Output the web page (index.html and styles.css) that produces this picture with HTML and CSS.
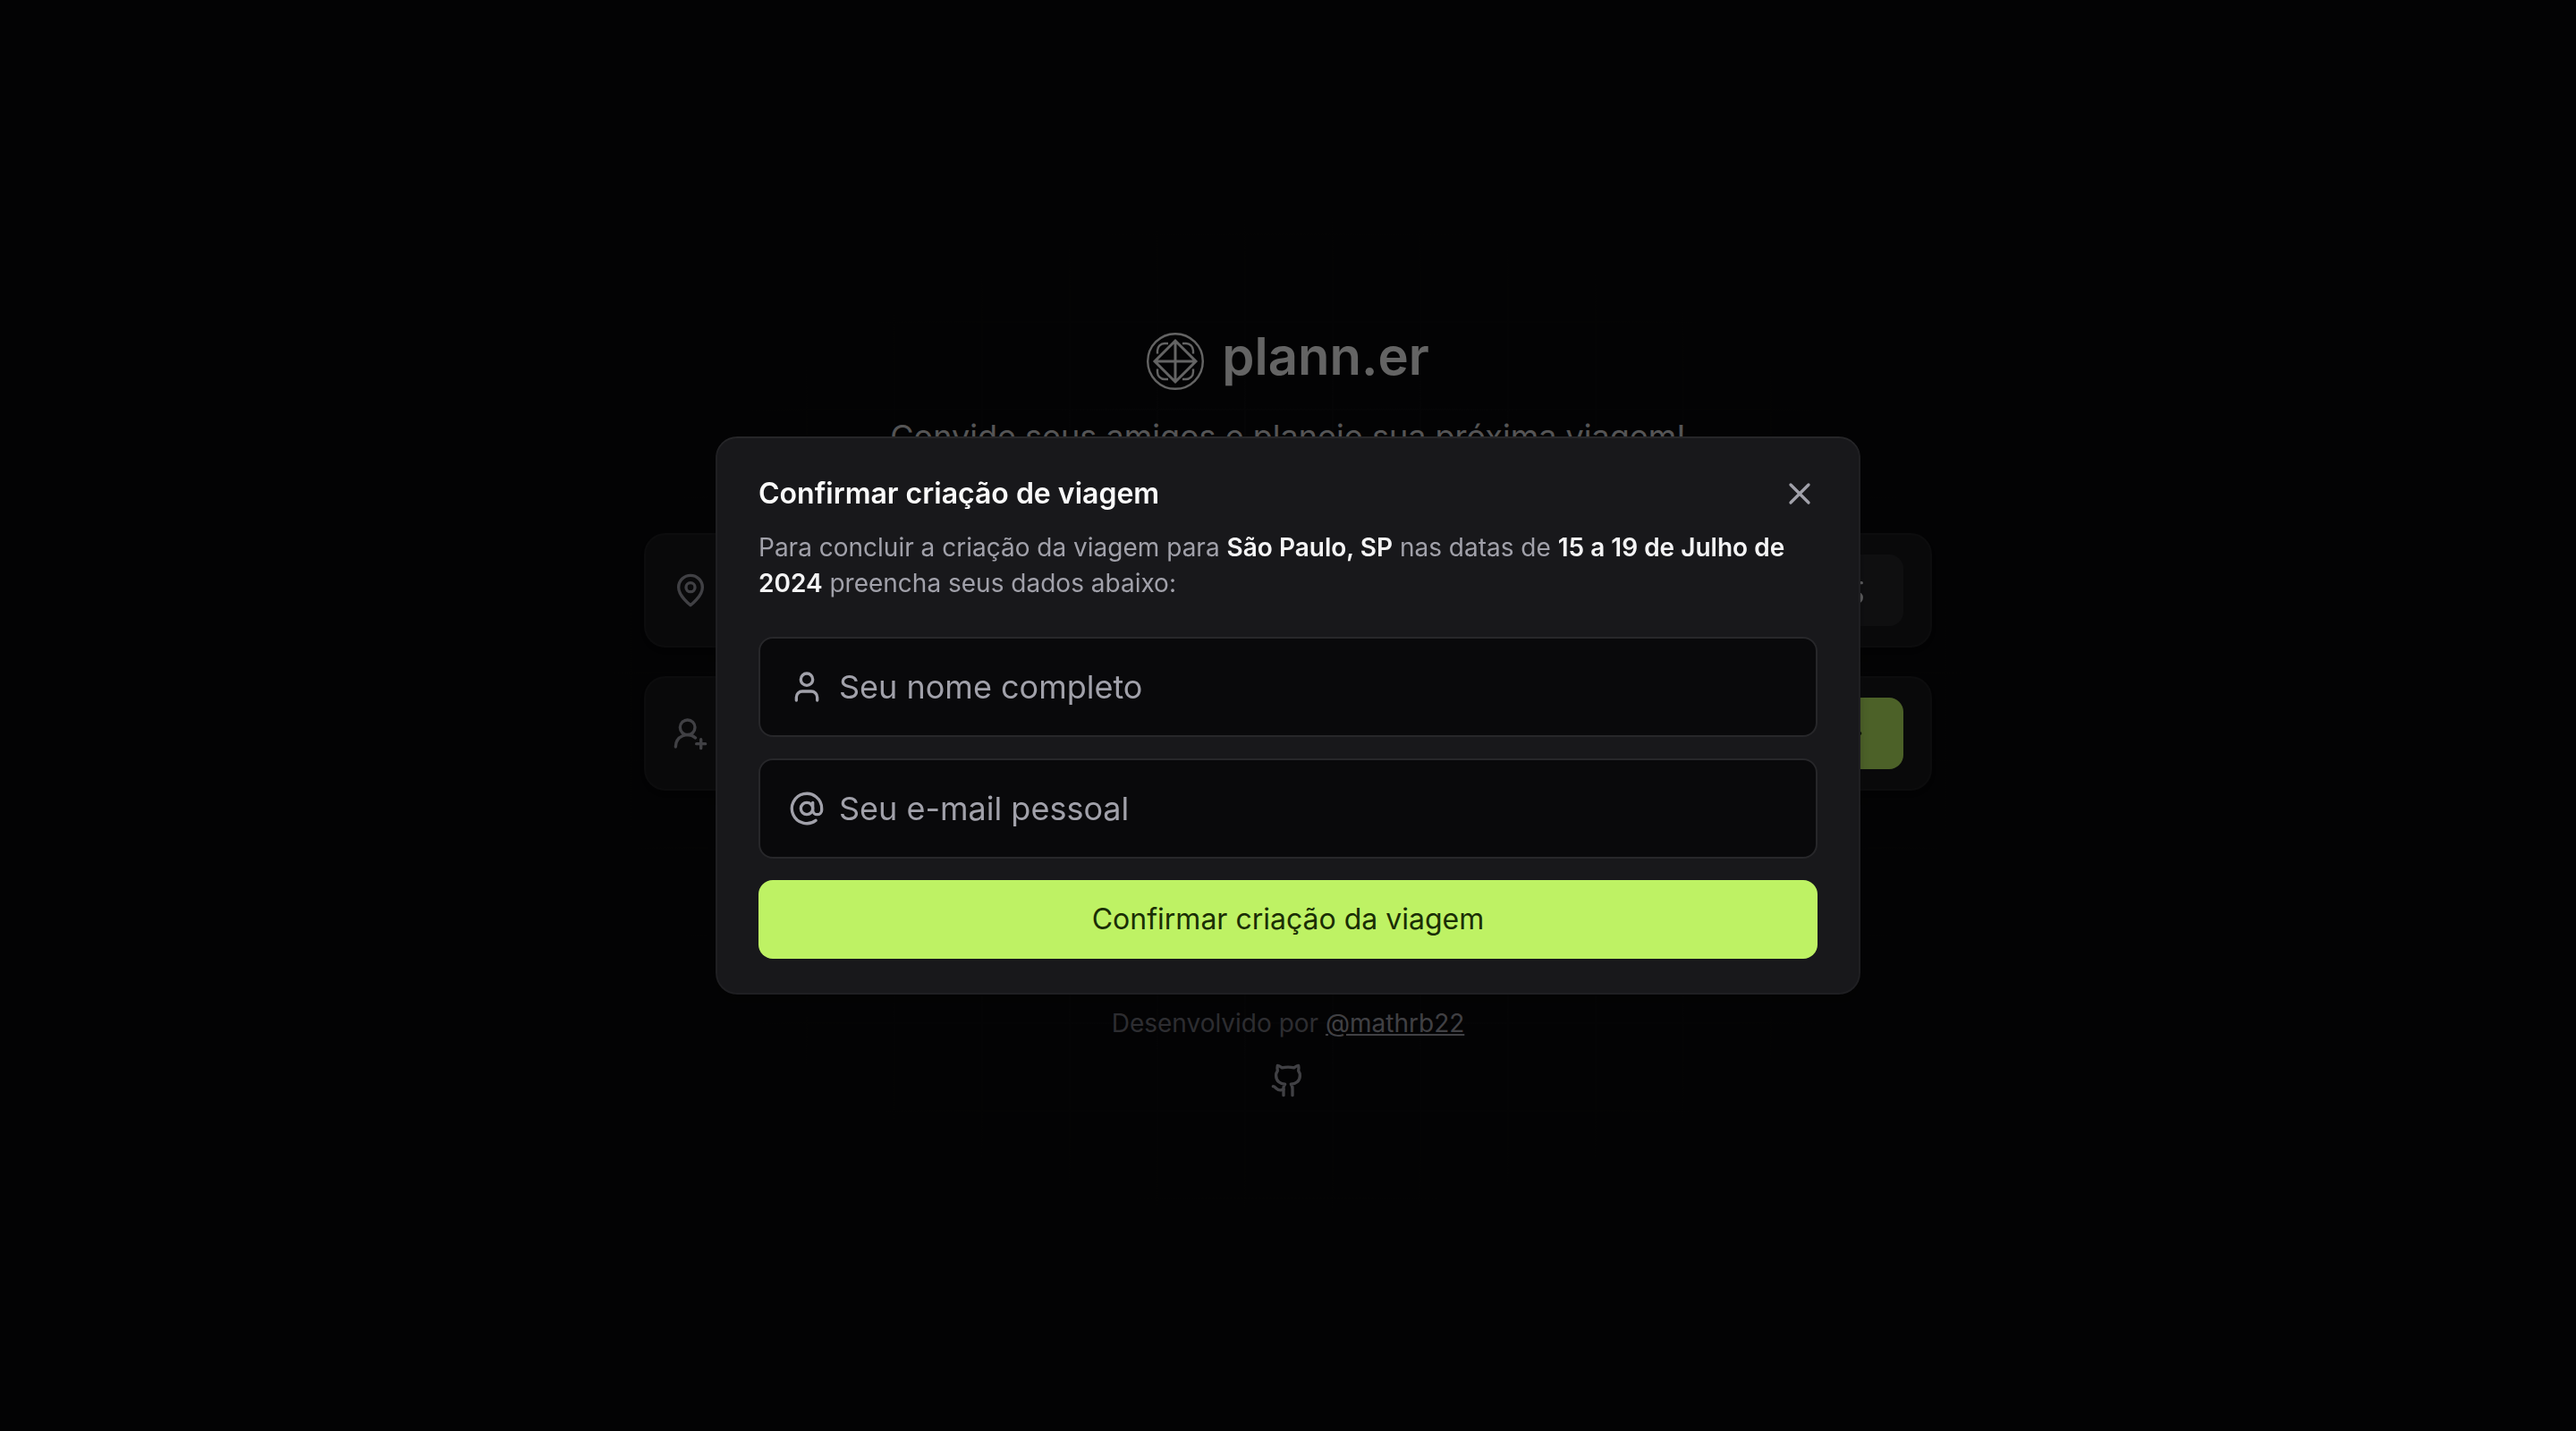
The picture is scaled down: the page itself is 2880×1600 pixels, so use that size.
FILE: index.html
```html
<!DOCTYPE html>
<html lang="pt-BR">
<head>
  <meta charset="utf-8">
  <meta name="viewport" content="width=device-width, initial-scale=1">
  <title>plann.er</title>
  <link rel="stylesheet" href="styles.css">
</head>
<body>
  <main class="page">
    <div class="column">
      <header class="intro">
        <h1 class="logo">
          <svg class="logo-mark" viewBox="0 0 64 64" aria-hidden="true">
            <circle cx="32" cy="32" r="30.800"/>
            <path d="M12 23.500v-3.500a8 8 0 0 1 8-8h4M40 12h4a8 8 0 0 1 8 8v3.500M52 40.500V44a8 8 0 0 1-8 8h-4M24 52h-4a8 8 0 0 1-8-8v-3.500"/>
            <path class="logo-diamond" d="M32 9 55 32 32 55 9 32zM32 9v46M9 32h46"/>
          </svg>
          <span class="logo-name">plann.er</span>
        </h1>
        <p class="tagline">Convide seus amigos e planeje sua próxima viagem!</p>
      </header>

      <div class="steps">
        <section class="step">
          <svg class="icon" viewBox="0 0 24 24" aria-hidden="true"><path d="M20 10c0 6-8 12-8 12s-8-6-8-12a8 8 0 0 1 16 0Z"/><circle cx="12" cy="10" r="3"/></svg>
          <button class="step-button" type="button" aria-label="Alterar local e data">
            <svg class="icon" viewBox="0 0 24 24" aria-hidden="true"><path d="M20 7h-9M14 17H5"/><circle cx="17" cy="17" r="3"/><circle cx="7" cy="7" r="3"/></svg>
          </button>
        </section>
        <section class="step">
          <svg class="icon" viewBox="0 0 24 24" aria-hidden="true"><path d="M2 21a8 8 0 0 1 13.292-6"/><circle cx="10" cy="8" r="5"/><path d="M19 16v6M22 19h-6"/></svg>
          <button class="step-button step-button-primary" type="button" aria-label="Confirmar viagem">
            <svg class="icon" viewBox="0 0 24 24" aria-hidden="true"><path d="M5 12h14M12 5l7 7-7 7"/></svg>
          </button>
        </section>
      </div>

      <footer class="credits">
        <p class="credits-text">Desenvolvido por <a class="credits-link" href="#">@mathrb22</a></p>
        <a class="github" href="#" aria-label="GitHub">
          <svg class="icon" viewBox="0 0 24 24" aria-hidden="true"><path d="M15 22v-4a4.800 4.800 0 0 0-1-3.500c3 0 6-2 6-5.500.080-1.250-.270-2.480-1-3.500.280-1.150.280-2.350 0-3.500 0 0-1 0-3 1.500-2.640-.500-5.360-.500-8 0C6 2 5 2 5 2c-.300 1.150-.300 2.350 0 3.500A5.403 5.403 0 0 0 4 9c0 3.500 3 5.500 6 5.500-.390.490-.680 1.050-.850 1.650-.170.600-.220 1.230-.150 1.850v4"/><path d="M9 18c-4.510 2-5-2-7-2"/></svg>
        </a>
      </footer>
    </div>
  </main>

  <div class="overlay">
    <div class="modal" role="dialog" aria-modal="true" aria-labelledby="modal-title">
      <div class="modal-intro">
        <div class="modal-head">
          <h2 class="modal-title" id="modal-title">Confirmar criação de viagem</h2>
          <button class="close" type="button" aria-label="Fechar">
            <svg class="icon" viewBox="0 0 24 24" aria-hidden="true"><path d="M18 6 6 18M6 6l12 12"/></svg>
          </button>
        </div>
        <p class="modal-text">Para concluir a criação da viagem para <strong>São Paulo, SP</strong> nas datas de <strong>15 a 19 de Julho de 2024</strong> preencha seus dados abaixo:</p>
      </div>
      <form class="form">
        <label class="field">
          <svg class="icon" viewBox="0 0 24 24" aria-hidden="true"><circle cx="12" cy="7" r="4"/><path d="M19 21v-2a4 4 0 0 0-4-4H9a4 4 0 0 0-4 4v2"/></svg>
          <input class="field-input" type="text" name="name" placeholder="Seu nome completo" aria-label="Seu nome completo">
        </label>
        <label class="field">
          <svg class="icon" viewBox="0 0 24 24" aria-hidden="true"><circle cx="12" cy="12" r="4"/><path d="M16 8v5a3 3 0 0 0 6 0v-1a10 10 0 1 0-4 8"/></svg>
          <input class="field-input" type="email" name="email" placeholder="Seu e-mail pessoal" aria-label="Seu e-mail pessoal">
        </label>
        <button class="submit" type="submit">Confirmar criação da viagem</button>
      </form>
    </div>
  </div>
</body>
</html>
```
FILE: styles.css
```css
* {
  box-sizing: border-box;
  margin: 0;
}

body {
  background: #09090b;
  color: #fafafa;
  font-family: Inter, "Liberation Sans", sans-serif;
  font-size: 32px;
  line-height: 48px;
}

button,
input {
  border: 0;
  padding: 0;
  background: none;
  color: inherit;
  font: inherit;
}

.icon {
  display: block;
  flex: none;
  width: 40px;
  height: 40px;
  fill: none;
  stroke: currentColor;
  stroke-width: 2;
  stroke-linecap: round;
  stroke-linejoin: round;
}

/* Faint grid that fades out towards the edges */
.page {
  display: flex;
  align-items: center;
  justify-content: center;
  min-height: 100vh;
  background-image:
    radial-gradient(760px 560px at center, transparent 30%, #09090b 100%),
    linear-gradient(90deg, #101012 2px, transparent 2px),
    linear-gradient(#101012 2px, transparent 2px);
  background-position: center;
  background-size: 100% 100%, 98px 98px, 98px 98px;
}

.column {
  display: flex;
  flex-direction: column;
  width: 100%;
  max-width: 1440px;
}

.intro {
  display: flex;
  flex-direction: column;
  align-items: center;
  gap: 24px;
}

.logo {
  display: flex;
  align-items: flex-start;
  gap: 20px;
}

.logo-mark {
  width: 64px;
  height: 64px;
  fill: none;
  stroke: currentColor;
  stroke-width: 2.4;
}

.logo-diamond {
  stroke-width: 3;
}

.logo-name {
  font-size: 58px;
  font-weight: 600;
  line-height: 52px;
}

.tagline {
  color: #d4d4d8;
  font-size: 36px;
  line-height: 56px;
}

.steps {
  display: flex;
  flex-direction: column;
  gap: 32px;
  margin-top: 80px;
}

.step {
  display: flex;
  align-items: center;
  justify-content: space-between;
  height: 128px;
  padding: 0 32px;
  border-radius: 24px;
  background: #18181b;
  color: #a1a1aa;
  box-shadow: 0 8px 8px rgba(0, 0, 0, 0.1), 0 4px 4px rgba(0, 0, 0, 0.1), inset 0 0 0 2px rgba(255, 255, 255, 0.03);
}

.step-button {
  padding: 20px 40px;
  border-radius: 16px;
  background: #27272a;
  color: #e4e4e7;
}

.step-button-primary {
  background: #bef264;
  color: #1a2e05;
}

.credits {
  display: flex;
  flex-direction: column;
  align-items: center;
  gap: 24px;
  margin-top: 240px;
}

.credits-text {
  color: #71717a;
  font-size: 28px;
  line-height: 40px;
}

.credits-link,
.github {
  color: #a1a1aa;
}

.overlay {
  position: fixed;
  inset: 0;
  display: flex;
  align-items: center;
  justify-content: center;
  background: rgba(0, 0, 0, 0.6);
}

.modal {
  display: flex;
  flex-direction: column;
  gap: 40px;
  width: 100%;
  max-width: 1280px;
  padding: 40px 48px;
  border-radius: 24px;
  background: #18181b;
  box-shadow: 0 16px 16px rgba(0, 0, 0, 0.1), 0 8px 8px rgba(0, 0, 0, 0.1), inset 0 0 0 2px rgba(255, 255, 255, 0.03), inset 0 2px 0 rgba(255, 255, 255, 0.03);
}

.modal-intro {
  display: flex;
  flex-direction: column;
  gap: 16px;
}

.modal-head {
  display: flex;
  align-items: center;
  justify-content: space-between;
}

.modal-title {
  font-size: 32px;
  font-weight: 600;
  line-height: 48px;
}

.close {
  color: #a1a1aa;
}

.modal-text {
  color: #a1a1aa;
  font-size: 28px;
  line-height: 40px;
}

.modal-text strong {
  color: #f4f4f5;
  font-weight: 600;
}

.form {
  display: flex;
  flex-direction: column;
  gap: 24px;
}

.field {
  display: flex;
  align-items: center;
  gap: 16px;
  height: 112px;
  padding: 0 32px;
  border: 2px solid #27272a;
  border-radius: 16px;
  background: #09090b;
  color: #a1a1aa;
}

.field-input {
  flex: 1;
  min-width: 0;
  outline: none;
  font-size: 36px;
  line-height: 56px;
}

.field-input::placeholder {
  color: #a1a1aa;
  opacity: 1;
}

.submit {
  height: 88px;
  border-radius: 16px;
  background: #bef264;
  color: #1a2e05;
  font-size: 32px;
  line-height: 48px;
}
```
